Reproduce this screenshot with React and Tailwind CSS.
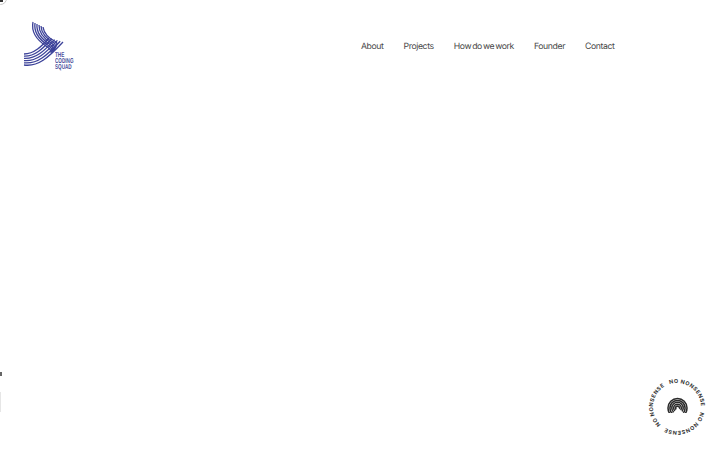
const navLinks = ['About', 'Projects', 'How do we work', 'Founder', 'Contact'];

// outer and inner edge of each wing, strands are blended between them
const upperOuter = [11, 2, 9, 12, 15, 20, 24, 26, 27, 28, 30, 30, 29, 33];
const upperInner = [21, 7, 22, 14, 28, 19, 34, 22, 36, 23, 34, 27, 32, 30];
const lowerOuter = [2, 45, 16, 47, 26, 38, 41, 22];
const lowerInner = [2, 34, 12, 34, 20, 26, 27, 18];
const steps = [0, 0.2, 0.4, 0.6, 0.8, 1];

const blend = (a, b, t) => a.map((v, i) => +(v + (b[i] - v) * t).toFixed(2));

function upperPath(t) {
  const p = blend(upperOuter, upperInner, t);
  return `M${p[0]} ${p[1]} C${p[2]} ${p[3]} ${p[4]} ${p[5]} ${p[6]} ${p[7]} C${p[8]} ${p[9]} ${p[10]} ${p[11]} ${p[12]} ${p[13]}`;
}

function lowerPath(t) {
  const p = blend(lowerOuter, lowerInner, t);
  return `M${p[0]} ${p[1]} C${p[2]} ${p[3]} ${p[4]} ${p[5]} ${p[6]} ${p[7]}`;
}

function Logo() {
  return (
    <div className="relative w-[52px] h-[52px]">
      <svg width="52" height="52" viewBox="0 0 52 52" fill="none" stroke="#3c4299" strokeWidth="1.3">
        {steps.map((t) => (
          <path key={t} d={upperPath(t)} />
        ))}
        {steps.map((t) => (
          <path key={t} d={lowerPath(t)} />
        ))}
      </svg>
      <div className="absolute left-[33px] top-[33px] flex flex-col font-['Liberation_Sans',sans-serif] text-[7px] leading-[5.8px] font-bold text-[#4a4f9c] scale-x-[0.66] origin-left [text-rendering:geometricPrecision]">
        <span>THE</span>
        <span>CODING</span>
        <span>SQUAD</span>
      </div>
    </div>
  );
}

function Badge() {
  const arcs = [9.5, 7.6, 5.7, 3.8, 1.9];
  const offsets = [0, 50.3, 100.5];
  return (
    <svg width="60" height="60" viewBox="0 0 60 60" className="block">
      <defs>
        <path id="badge-ring" d="M30 6 A24 24 0 1 1 29.99 6" />
        <clipPath id="badge-dome">
          <path d="M16 15 H45 V36 H36.5 L31 30.5 L26 36 H16 Z" />
        </clipPath>
      </defs>
      <g transform="rotate(-18 30 30)" fontFamily="Inter, sans-serif" fontSize="5.4" fontWeight="700" fill="#333333" letterSpacing="0.45" textRendering="geometricPrecision">
        {offsets.map((o) => (
          <text key={o}>
            <textPath href="#badge-ring" startOffset={o}>NO NONSENSE</textPath>
          </text>
        ))}
      </g>
      <g fill="none" stroke="#2b2b2b" strokeWidth="1.55" clipPath="url(#badge-dome)">
        {arcs.map((r) => (
          <circle key={r} cx="30.5" cy="31" r={r} />
        ))}
      </g>
    </svg>
  );
}

export default function App() {
  return (
    <div className="relative w-[720px] h-[450px] overflow-hidden bg-white font-['Inter',sans-serif]">
      {/* Header */}
      <header className="flex items-center h-[92px] pl-[22px]">
        <Logo />
        <nav className="flex items-center gap-5 ml-[287px] mt-[3px] text-[8.7px] tracking-[-0.4px] [word-spacing:-1px] text-[#484848] [text-rendering:geometricPrecision]">
          {navLinks.map((link) => (
            <a key={link} href="#">{link}</a>
          ))}
        </nav>
      </header>

      {/* Cursor ring */}
      <div className="absolute -left-[6px] -top-[8px] w-[13px] h-[13px] rounded-full border border-[#c9c9c9]" />
      <div className="absolute left-0 top-0 w-[3px] h-[2px] bg-[#333333]" />

      {/* Clipped side marks */}
      <div className="absolute left-0 top-[372px] w-[2px] h-[4px] bg-[#666666]" />
      <div className="absolute left-0 top-[392px] w-[1px] h-[20px] bg-[#e6e6e6]" />

      {/* No nonsense badge */}
      <div className="absolute left-[647px] top-[377px]">
        <Badge />
      </div>
    </div>
  );
}
